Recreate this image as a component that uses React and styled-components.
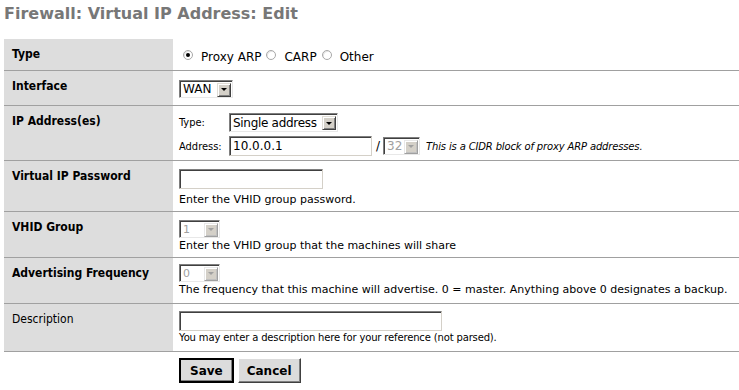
import React from 'react';
import styled, { createGlobalStyle } from 'styled-components';

const GlobalStyle = createGlobalStyle`
  body {
    margin: 0;
    background: #fff;
    font-family: "DejaVu Sans", sans-serif;
    color: #000;
  }
`;

const Page = styled.div`
  padding: 4px 0 0 4px;
`;

const Title = styled.div`
  font-size: 16px;
  font-weight: 700;
  color: #777;
  height: 35px;
  line-height: 20px;
`;

const Row = styled.div`
  display: grid;
  grid-template-columns: 169px 1fr;
  height: ${p => p.$h}px;
  box-sizing: border-box;
  border-bottom: 1px solid #a0a0a0;
`;

const Label = styled.div`
  background: #dddddd;
  padding: 7px 8px;
  font-family: "DejaVu Sans Condensed", "DejaVu Sans", sans-serif;
  font-size: 12px;
  line-height: 16px;
  font-weight: ${p => (p.$plain ? 400 : 700)};
`;

const Cell = styled.div`
  padding: ${p => p.$pt}px 6px 0;
  font-size: 11px;
`;

const Radios = styled.div`
  display: flex;
  align-items: center;
  font-size: 12px;
`;

const RadioDot = styled.span`
  width: 8px;
  height: 8px;
  border-radius: 50%;
  border: 1px solid #a8a8a8;
  background: #fff;
  box-shadow: inset 1px 1px 0 #e6e6e6;
  display: inline-flex;
  align-items: center;
  justify-content: center;
  margin: 0 8px 0 ${p => (p.$first ? 4 : 5)}px;
  position: relative;
  top: -2px;
  &::after {
    content: '';
    width: 4px;
    height: 4px;
    border-radius: 50%;
    background: ${p => (p.$on ? '#000' : 'transparent')};
  }
`;

const Select = styled.div`
  display: inline-flex;
  align-items: center;
  justify-content: space-between;
  width: ${p => p.$w}px;
  height: ${p => p.$ht || 18}px;
  box-sizing: border-box;
  border: 1px solid;
  border-color: #7f7f7f #e8e8e8 #e8e8e8 #7f7f7f;
  box-shadow: inset 1px 1px 0 #404040;
  background: #fff;
  padding: 0 1px 0 3px;
  font-size: ${p => p.$fs || 12}px;
  letter-spacing: ${p => (p.$tight ? '-0.3px' : 'normal')};
  color: ${p => (p.$off ? '#a0a0a0' : '#000')};
  white-space: nowrap;
`;

const Arrow = styled.span`
  flex: none;
  width: 14px;
  height: 14px;
  box-sizing: border-box;
  background: #d4d0c8;
  border: 1px solid;
  border-color: ${p => (p.$off ? '#e8e8e8 #a0a0a0 #a0a0a0 #e8e8e8' : '#e0ddd6 #404040 #404040 #e0ddd6')};
  box-shadow: inset 1px 1px 0 #fff, inset -1px -1px 0 ${p => (p.$off ? '#c0c0c0' : '#808080')};
  display: inline-flex;
  align-items: center;
  justify-content: center;
  margin-top: 1px;
  &::after {
    content: '';
    border-left: 3px solid transparent;
    border-right: 3px solid transparent;
    border-top: 3px solid ${p => (p.$off ? '#a0a0a0' : '#000')};
  }
`;

const Input = styled.div`
  width: ${p => p.$w}px;
  height: 20px;
  box-sizing: border-box;
  border: 1px solid;
  border-color: #7f7f7f #d4d0c8 #d4d0c8 #7f7f7f;
  box-shadow: inset 1px 1px 0 #404040;
  background: #fff;
  padding: 2px 3px 0;
  font-size: 12px;
  line-height: 15px;
`;

const Hint = styled.div`
  font-size: ${p => (p.$small ? 10 : 11)}px;
  letter-spacing: ${p => (p.$small ? '-0.15px' : 'normal')};
  line-height: 14px;
  margin-top: ${p => p.$mt}px;
`;

const Line = styled.div`
  display: flex;
  align-items: center;
  margin-bottom: ${p => p.$mb || 0}px;
`;

const Caption = styled.span`
  width: 50px;
  font-family: "DejaVu Sans Condensed", "DejaVu Sans", sans-serif;
  font-size: 11px;
`;

const Slash = styled.span`
  margin: 0 3px 0 4px;
  font-size: 12px;
`;

const Note = styled.span`
  font-style: italic;
  font-size: 10px;
  letter-spacing: -0.15px;
  margin-left: 6px;
`;

const Buttons = styled.div`
  display: flex;
  gap: 4px;
  padding: 6px 0 0 175px;
`;

const Button = styled.button`
  height: 25px;
  padding: 0 ${p => p.$px}px;
  font-family: "DejaVu Sans", sans-serif;
  font-size: 12px;
  font-weight: 700;
  background: #dcdcdc;
  color: #000;
  border: ${p => (p.$primary ? '2px' : '1px')} solid;
  border-color: ${p => (p.$primary ? '#000' : '#fff #404040 #404040 #fff')};
  box-shadow: inset -1px -1px 0 #808080;
`;

function Dropdown({ w, value, off, fs, ht, tight }) {
  return (
    <Select $w={w} $off={off} $fs={fs} $ht={ht} $tight={tight}>
      <span>{value}</span>
      <Arrow $off={off} />
    </Select>
  );
}

export default function App() {
  return (
    <Page>
      <GlobalStyle />
      <Title>Firewall: Virtual IP Address: Edit</Title>
      <div>
        <Row $h={32}>
          <Label>Type</Label>
          <Cell $pt={11}>
            <Radios>
              <RadioDot $on $first /> Proxy ARP
              <RadioDot /> CARP
              <RadioDot /> Other
            </Radios>
          </Cell>
        </Row>
        <Row $h={35}>
          <Label>Interface</Label>
          <Cell $pt={9}>
            <Dropdown w={54} value="WAN" />
          </Cell>
        </Row>
        <Row $h={55}>
          <Label>IP Address(es)</Label>
          <Cell $pt={7}>
            <Line $mb={4}>
              <Caption>Type:</Caption>
              <Dropdown w={109} ht={19} value="Single address" tight />
            </Line>
            <Line>
              <Caption>Address:</Caption>
              <Input $w={143}>10.0.0.1</Input>
              <Slash>/</Slash>
              <Dropdown w={37} value="32" off />
              <Note>This is a CIDR block of proxy ARP addresses.</Note>
            </Line>
          </Cell>
        </Row>
        <Row $h={51}>
          <Label>Virtual IP Password</Label>
          <Cell $pt={8}>
            <Input $w={144} />
            <Hint $mt={4}>Enter the VHID group password.</Hint>
          </Cell>
        </Row>
        <Row $h={46}>
          <Label>VHID Group</Label>
          <Cell $pt={8}>
            <Dropdown w={41} value="1" off fs={11} />
            <Hint $mt={1}>Enter the VHID group that the machines will share</Hint>
          </Cell>
        </Row>
        <Row $h={46}>
          <Label>Advertising Frequency</Label>
          <Cell $pt={6}>
            <Dropdown w={41} value="0" off fs={11} />
            <Hint $mt={1}>
              The frequency that this machine will advertise. 0 = master. Anything above 0 designates a backup.
            </Hint>
          </Cell>
        </Row>
        <Row $h={48}>
          <Label $plain>Description</Label>
          <Cell $pt={7}>
            <Input $w={263} />
            <Hint $small $mt={0}>
              You may enter a description here for your reference (not parsed).
            </Hint>
          </Cell>
        </Row>
      </div>
      <Buttons>
        <Button $primary $px={9}>Save</Button>
        <Button $px={8}>Cancel</Button>
      </Buttons>
    </Page>
  );
}
